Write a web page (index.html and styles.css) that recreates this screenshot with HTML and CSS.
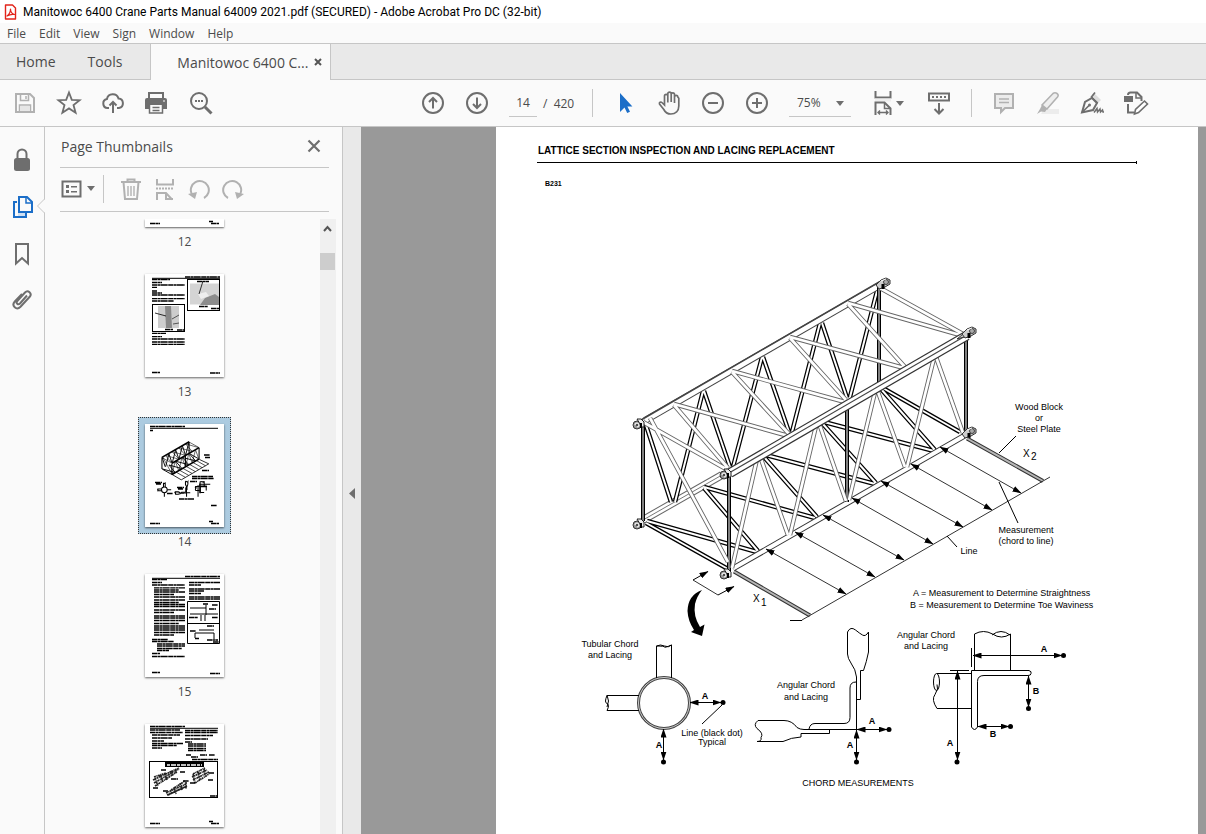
FILE: index.html
```html
<!DOCTYPE html>
<html lang="en">
<head>
    <meta charset="UTF-8">
    <meta name="viewport" content="width=device-width, initial-scale=1.0">
    <title>Manitowoc 6400 Crane Parts Manual 64009 2021.pdf (SECURED) - Adobe Acrobat Pro DC (32-bit)</title>
    <link rel="stylesheet" href="styles.css">
</head>
<body>
    <header class="titlebar">
        <svg class="app-icon" width="13" height="16" viewBox="0 0 13 16">
            <path d="M1.500 1h7l3 3v11h-10z" fill="#fff" stroke="#e2231a" stroke-width="1.400" stroke-linejoin="round"/>
            <path d="M3 12c2-1.500 3.500-4.500 3.500-7 0 3 2 5 4 5.500-3-.6-5 0-7.500 1.500z" fill="none" stroke="#e2231a" stroke-width="1.200" stroke-linejoin="round"/>
        </svg>
        <span>Manitowoc 6400 Crane Parts Manual 64009 2021.pdf (SECURED) - Adobe Acrobat Pro DC (32-bit)</span>
    </header>

    <nav class="menubar">
        <button>File</button>
        <button>Edit</button>
        <button>View</button>
        <button>Sign</button>
        <button>Window</button>
        <button>Help</button>
    </nav>

    <div class="tabs">
        <button class="tab">Home</button>
        <button class="tab">Tools</button>
        <div class="tab-doc">
            <button class="tab-name">Manitowoc 6400 C...</button>
            <button class="tab-close" aria-label="Close tab">
                <svg width="8" height="8" viewBox="0 0 8 8"><path d="M1 1l6 6M7 1l-6 6" stroke="#555" stroke-width="2"/></svg>
            </button>
        </div>
    </div>

    <div class="toolbar">
        <div class="group">
            <button class="tool light" aria-label="Save">
                <svg width="24" height="24" viewBox="0 0 24 24"><path d="M3 3h14l4 4v14H3z"/><path d="M7.500 3.500v6h8v-6M13 5v3M6.500 21v-7h11v7" stroke-width="1.500"/><path d="M7 15h10v5H7z" fill="#e6e6e6" stroke="none"/></svg>
            </button>
            <button class="tool" aria-label="Star">
                <svg width="26" height="26" viewBox="0 0 26 26"><path d="M13 2.500l2.800 7.300 7.800.4-6.100 4.900 2.100 7.600L13 18.400l-6.600 4.300 2.100-7.600-6.100-4.900 7.800-.4z" stroke-width="1.800"/></svg>
            </button>
            <button class="tool" aria-label="Upload">
                <svg width="24" height="24" viewBox="0 0 24 24"><path d="M8 17H6.500a4.500 4.500 0 0 1-.6-8.900A6 6 0 0 1 17.500 7.500 4.800 4.800 0 0 1 18 17h-2"/><path d="M12 22V11M8.500 14.500L12 11l3.500 3.500"/></svg>
            </button>
            <button class="tool" aria-label="Print">
                <svg width="24" height="24" viewBox="0 0 24 24"><path d="M4 8V2h14v6"/><path d="M0 9q0-2 2-2h18q2 0 2 2v9h-4v-4H4v4H0z" fill="#6e6e6e" stroke="none"/><path d="M4.500 13v9h13v-9zM7.500 16.500h7M7.500 19.500h7" stroke-width="1.500"/><path d="M18 10h2" stroke="#fff" stroke-width="1"/></svg>
            </button>
            <button class="tool" aria-label="Find">
                <svg width="24" height="24" viewBox="0 0 24 24"><circle cx="10" cy="10" r="8"/><path d="M16 16l6.500 6.500" stroke-width="3"/><path d="M6 10h2M9 10h2M12 10h2"/></svg>
            </button>
        </div>
        <div class="group main-tools">
            <button class="tool" aria-label="Previous page">
                <svg width="24" height="24" viewBox="0 0 24 24"><circle cx="12" cy="12" r="10"/><path d="M12 17.500V7.500M8 11l4-4 4 4"/></svg>
            </button>
            <button class="tool" aria-label="Next page">
                <svg width="24" height="24" viewBox="0 0 24 24"><circle cx="12" cy="12" r="10"/><path d="M12 6.500v10M8 13l4 4 4-4"/></svg>
            </button>
            <input class="page-input" type="text" value="14" aria-label="Page number">
            <span class="page-total">/&nbsp; 420</span>
            <span class="sep"></span>
            <button class="tool" aria-label="Select">
                <svg width="24" height="24" viewBox="0 0 24 24"><path d="M7 2v19l4.500-4.500 2.700 5.500 2.800-1.300-2.600-5.200h5z" fill="#1b6ec8" stroke="none"/></svg>
            </button>
            <button class="tool" aria-label="Hand">
                <svg width="26" height="26" viewBox="0 0 26 26"><path d="M8.500 15V6a1.600 1.600 0 0 1 3.300 0v6.500V3.800a1.700 1.700 0 0 1 3.400 0V12 4.500a1.600 1.600 0 0 1 3.300 0V13 7a1.600 1.600 0 0 1 3.300 0l1 1.200V16c0 5-3.300 8-8 8-3.500 0-5.500-1.500-7-4.500L3.500 14c-.7-1.500 1.300-2.600 2.400-1.500z" stroke-width="1.700"/></svg>
            </button>
            <button class="tool" aria-label="Zoom out">
                <svg width="24" height="24" viewBox="0 0 24 24"><circle cx="12" cy="12" r="10"/><path d="M7 12h10"/></svg>
            </button>
            <button class="tool" aria-label="Zoom in">
                <svg width="24" height="24" viewBox="0 0 24 24"><circle cx="12" cy="12" r="10"/><path d="M7 12h10M12 7v10"/></svg>
            </button>
            <div class="zoom">
                <select aria-label="Zoom level"><option>75%</option><option>100%</option></select>
            </div>
            <button class="tool fit" aria-label="Fit page">
                <svg width="18" height="26" viewBox="0 0 18 26"><path d="M1.500 1v6.500h15V1"/><path d="M1 8.500h16v3H1z" fill="#eee" stroke="none"/><path d="M1.500 25V12.500h9l6 6V25"/><path d="M10.500 13v5.500h6" stroke-width="1.500"/><path d="M4 22.500h10M6 20.500l-2 2 2 2M12 20.500l2 2-2 2" stroke-width="1.400"/></svg>
                <span class="caret"></span>
            </button>
            <button class="tool" aria-label="Scrolling">
                <svg width="24" height="24" viewBox="0 0 24 24"><path d="M2 2.500h20v7H2z"/><path d="M5 6h2M9 6h2M13 6h2M17 6h2M12 12v10M7.500 18l4.500 4.500 4.500-4.500"/></svg>
            </button>
            <span class="sep tight"></span>
            <button class="tool light" aria-label="Comment">
                <svg width="24" height="24" viewBox="0 0 24 24"><path d="M3 3h18v14h-8l-4 4v-4H3z" fill="#ececec"/><path d="M7 8h10M7 11.500h10" stroke-width="1.400"/></svg>
            </button>
            <button class="tool light" aria-label="Highlight">
                <svg width="24" height="24" viewBox="0 0 24 24"><path d="M8 18h15v5H5z" fill="#ececec" stroke="none"/><path d="M6 14L17 2.500q2-1.500 4 0t.5 3.500L11 18z" fill="#eee" stroke-width="1.600"/><path d="M6 14l5 4-2 3-4-.500-4 2.500 3-5z" fill="#b1b1b1" stroke="none"/></svg>
            </button>
            <button class="tool" aria-label="Sign">
                <svg width="26" height="24" viewBox="0 0 26 24"><path d="M13 4l2-2 7 7-3 3z" fill="#ddd" stroke="none"/><path d="M3 21.500L6 11l7-4 5 5-4 7z"/><path d="M3 21.500l7-7M16 1.500L12.500 6l6 6" stroke-width="1.700"/><circle cx="10.500" cy="14" r="1.500" fill="#6e6e6e" stroke="none"/><path d="M15 21.500l3-4 .5 3.500 2.500-3 .5 3 2-2 .5 2h1" stroke-width="1.500"/></svg>
            </button>
            <button class="tool" aria-label="More tools">
                <svg width="26" height="26" viewBox="0 0 26 26"><path d="M1 6h9v6H1z" fill="#6e6e6e" stroke="none"/><path d="M5 5q0-2.500 2.500-2.500H14l4.500 4.500v4M5 14v8.500h6"/><path d="M13 3v5h5" stroke-width="1.500"/><path d="M11.500 24l1-4.500 9-8.500 3 3-9 8.500z" fill="#fff" stroke-width="1.600"/></svg>
            </button>
        </div>
    </div>

    <div class="workspace">
        <aside class="rail">
            <button aria-label="Security">
                <svg width="18" height="24" viewBox="0 0 18 24"><path d="M4.500 11V6a4.500 4.500 0 0 1 9 0v5" fill="none" stroke="#6e6e6e" stroke-width="2"/><rect x="1" y="10" width="16" height="13" rx="2.500" fill="#6e6e6e"/></svg>
            </button>
            <button class="active" aria-label="Page Thumbnails">
                <svg width="22" height="24" viewBox="0 0 22 24" fill="none" stroke="#1b6ec8" stroke-width="2"><path d="M7 17h8v4H7z" fill="#cfe0f3" stroke="none"/><path d="M6 7H3v15h12v-4"/><path d="M8 2h8l5 5v10H8z"/><path d="M15 2.500V8h5" stroke-width="1.500"/></svg>
                <svg class="notch" width="8" height="14" viewBox="0 0 8 14"><path d="M8 0L1 7l7 7z" fill="#fafafa"/><path d="M7.500 0L.500 7l7 7" fill="none" stroke="#c6c6c6"/></svg>
            </button>
            <button aria-label="Bookmarks">
                <svg width="18" height="24" viewBox="0 0 18 24"><path d="M3 2h12v19.500L9 16l-6 5.500z" fill="none" stroke="#6e6e6e" stroke-width="2"/></svg>
            </button>
            <button aria-label="Attachments">
                <svg width="22" height="24" viewBox="0 0 22 24"><path d="M16 6.500l-7 8c-2 2-4.500-.5-2.700-2.500L14 3.500c3-3 7.500 1 4.700 4.300l-9.200 10c-4 4-9.500-1-5.700-5.300L11 5" fill="none" stroke="#6e6e6e" stroke-width="2"/></svg>
            </button>
        </aside>

        <section class="panel">
            <div class="panel-head">
                <span>Page Thumbnails</span>
                <button aria-label="Close panel">
                    <svg width="14" height="14" viewBox="0 0 14 14"><path d="M1.500 1.500l11 11M12.500 1.500l-11 11" stroke="#6e6e6e" stroke-width="2.200"/></svg>
                </button>
            </div>
            <div class="panel-tools">
                <button class="options" aria-label="Options">
                    <svg width="21" height="18" viewBox="0 0 21 18"><path d="M1.500 1.500h18v15h-18z" fill="none" stroke="#6e6e6e" stroke-width="2"/><path d="M5 5h3v3H5zM5 10h3v3H5zM10 6h6v1.500h-6zM10 11h6v1.500h-6z" fill="#6e6e6e"/></svg>
                    <span class="caret"></span>
                </button>
                <button class="mini first" aria-label="Delete pages">
                    <svg width="22" height="24" viewBox="0 0 22 24"><path d="M1 5h20M7.500 5V2.500h7V5M3.500 5l1.500 17h12l1.500-17"/><path d="M8 9v10M11 9v10M14 9v10" stroke-width="1.400"/></svg>
                </button>
                <button class="mini" aria-label="Extract pages">
                    <svg width="20" height="24" viewBox="0 0 20 24"><path d="M2 2v5.500h16V2M2 23v-7h9l6 6.500M11 16v6h7"/><path d="M1 11.500h18" stroke-dasharray="2 1"/></svg>
                </button>
                <button class="mini" aria-label="Rotate left">
                    <svg width="22" height="24" viewBox="0 0 22 24"><path d="M4 17.500a9 9 0 1 1 12 3.500"/><path d="M0 17l9-2-2 7z" fill="#b1b1b1" stroke="none"/></svg>
                </button>
                <button class="mini" aria-label="Rotate right">
                    <svg width="22" height="24" viewBox="0 0 22 24"><path d="M18 17.500a9 9 0 1 0-12 3.500"/><path d="M22 17l-9-2 2 7z" fill="#b1b1b1" stroke="none"/></svg>
                </button>
            </div>
            <div class="thumb-area">
                <div class="thumbs">
                    <a class="thumb cut" href="#p12">
                        <svg width="79" height="8" viewBox="0 95 79 8"><path class="txt" d="M5 99.500h10M64 97.500h4M66 99.500h8"/></svg>
                        <span>12</span>
                    </a>
                    <a class="thumb" href="#p13">
                        <svg width="79" height="103" viewBox="0 0 79 103">
                            <path class="txt" d="M40 3h35M7 5.500h18M7 8.500h10M7 11h33M7 13.300h5M7 17h5M7 19h10M7 21h33M7 24.700h33M7 27h22M7 59.300h14M7 62.700h10M7 65h33M7 68h33M7 70.300h33M7 98.500h8M65 99h10"/>
                            <path class="rule" d="M7 4.300h68"/>
                            <rect class="frame" x="42.500" y="5.500" width="32" height="31"/>
                            <path d="M45 9.500h29v21H45z" fill="#d4d4d4"/><path d="M55 31l5-7 10-4 4 3v8z" fill="#8c8c8c"/><path d="M53 20l8-2 3 4-8 3z" fill="#eee"/><path d="M58 7l-4 13" stroke="#000" stroke-width=".8"/>
                            <rect class="frame" x="7.500" y="30.500" width="32" height="27"/>
                            <path d="M13 32h21v22H13z" fill="#cdcdcd"/><path d="M20 32h6l1 22h-6z" fill="#888"/><path d="M27 45l7-4M28 50l6-1" stroke="#555"/><path d="M10 39l11 3" stroke="#000" stroke-width=".8"/>
                            <path class="txt" d="M52 7.500h12M54 32.500h9M66 34.500h8M20 55.500h8M32 56h7"/>
                        </svg>
                        <span>13</span>
                    </a>
                    <a class="thumb selected" href="#p14">
                        <svg width="79" height="103" viewBox="0 0 79 103">
                            <path class="txt" d="M5 2.500h35M5 6.500h3M59 31h6M60 33.500h5M57 46.500h7M47 52.500h21M47 54.500h22M10 58.500h7M11 60h5M32 63.500h7M33 65h5M45 57.500h7M22 69.500h6M34 75h15M66 81.500h6M5 99.500h10M64 97.500h4M66 99.500h8"/>
                            <path class="rule" d="M5 4.300h68"/>
                            <g transform="translate(-57 -15) scale(.115)" fill="none" stroke="#000">
                                <use href="#tubes-dark" stroke-width="8"/>
                                <use href="#tubes-light" stroke-width="5"/>
                                <use href="#posts" stroke-width="9"/>
                                <path d="M643 421L880 285M730 472L966 336M730 570L965 436" stroke-width="14"/>
                                <path d="M734 571l77 45 239-139-83-39" stroke-width="7"/>
                                <use href="#measures" stroke-width="6"/>
                                <use href="#details" stroke-width="9"/>
                                <circle cx="664" cy="703" r="25" stroke-width="9"/>
                                <path d="M690 702H723M664 729V762M857 729H889M857 730V762M973 655H1063M957 671V762M1028 676V708M978 726H1010" stroke-width="9"/>
                            </g>
                        </svg>
                        <span>14</span>
                    </a>
                    <a class="thumb" href="#p15">
                        <svg width="79" height="103" viewBox="0 0 79 103">
                            <path class="txt" d="M40 2.500h35M7 5.500h15M7 8.500h10M7 11h33M9 13.800h31M9 16h25M9 18h31M9 20.500h20M9 23h31M9 26h31M9 28.500h25M9 30.500h31M9 32.500h31M9 36h31M9 38.500h20M9 42h31M9 44h31M9 46.500h31M9 49.500h25M9 52h31M9 54h31M9 56h31M9 58.500h31M9 61h20M7 65.500h16M7 67.500h22M12 70h28M12 72h28M12 74.500h25M12 76.500h12M7 79.500h8M7 82.500h33M44 8.500h31M44 11h12M44 15h31M44 17h15M44 19.500h12M44 23h31M44 25h31M7 98.500h8M65 99.500h10"/>
                            <path class="rule" d="M7 4.300h68"/>
                            <path class="frame" d="M42.500 27.500h32v42h-32zM42.500 49.500h32"/>
                            <path d="M45 34h16M45 40h28M56 41v6M60 41v6M61 31v10M50 59h19M50 59v5M69 59v6M54 56h15" stroke="#000" fill="none"/>
                            <path class="txt" d="M58 30h5M67 31h6M64 35h7M44 43.500h9M67 43.500h6M62 52h7M45 57h6M50 64.500h4M62 66h11M68 68h6"/>
                        </svg>
                        <span>15</span>
                    </a>
                    <a class="thumb" href="#p16" aria-label="Page 16">
                        <svg width="79" height="103" viewBox="0 0 79 103">
                            <path class="txt" d="M5 2.500h35M5 6h30M5 8.500h33M7 11h28M7 14h20M7 17h12M7 19.500h31M7 21.500h25M7 24h10M40 6.500h33M40 8.500h33M40 11.500h28M40 15h23M40 18h7M43 20h18M43 22h18M43 24.500h18M43 26.500h18M41 31h5M46 33h7M55 31h7M64 31h6M47 35.500h26"/>
                            <path class="rule" d="M5 4.300h68"/>
                            <rect class="frame" x="4.500" y="37.500" width="68" height="36"/>
                            <path d="M20 38h39v5H20z"/><path d="M22 41h35" stroke="#fff" stroke-width="1.500" stroke-dasharray="3 1 5 1"/>
                            <g fill="none" stroke="#222" stroke-dasharray="2 .6 1 .4">
                                <path d="M8 56L34 44M9 59L34 45M10 62L32 48M9 53l12-4M10 54l3 8M15 51l3 7M20 49l2 7M25 47l2 5" stroke-width="1.700"/>
                                <path d="M48 50l12-6M47 53l15-7M48 56l16-8M50 59l14-9M48 50l2 9M53 48l2 8M59 45l2 8" stroke-width="1.700"/>
                                <path d="M21 69l20-9M23 71l19-9M26 66l14-9M22 71l18-8M29 63l2 7M35 59l2 7M41 58v7" stroke-width="1.700"/>
                            </g>
                            <path class="txt" d="M16 46h5M35 48h5M26 55h7M8 64h5M45 59h5M63 56h5M64 49h5M18 67h5M38 57h6M65 72h7M5 99.500h10M64 97.500h4M66 99.500h8"/>
                        </svg>
                    </a>
                </div>
                <div class="scrollbar">
                    <svg width="9" height="7" viewBox="0 0 9 7"><path d="M1 6l3.500-4L8 6" fill="none" stroke="#555" stroke-width="2"/></svg>
                    <div class="scroll-thumb"></div>
                </div>
            </div>
        </section>

        <button class="collapse" aria-label="Collapse panel">
            <svg width="6" height="11" viewBox="0 0 6 11"><path d="M6 0v11L0 5.500z" fill="#6e6e6e"/></svg>
        </button>

        <main class="viewer">
            <article class="page">
                <svg class="figure" viewBox="496 127 702 707">
                    <defs>
                        <marker id="head" markerUnits="userSpaceOnUse" markerWidth="9" markerHeight="6" refX="8.500" refY="3" orient="auto-start-reverse">
                            <path d="M0 0l9 3-9 3z" fill="#000" stroke="none"/>
                        </marker>
                        <!-- bottom and back lacing -->
                        <path id="tubes-dark" d="M647 521L757 552M704 488L758 551M704 487L815 518M646 523L728 569M764 457L817 517M766 455L875 484M822 423L876 483M824 422L934 451M881 389L935 450M881 387L960 432M645 422L671 502M703 391L675 502M704 391L730 467M762 357L733 467M763 357L789 432M820 323L792 432M822 323L847 398M877 291L850 397"/>
                        <!-- top and front lacing -->
                        <path id="tubes-light" d="M643 422L726 469M650 418L728 562M880 288L963 334M674 405L728 468M674 404L785 435M732 372L789 434M732 371L845 402M790 338L846 400M790 337L904 368M848 304L905 367M848 303L960 335M757 459L732 568M761 459L788 535M816 426L790 535M820 426L846 501M875 392L849 500M878 392L905 467M934 358L907 467M936 357L963 433"/>
                        <path id="posts" d="M643 422V521M729 474V571M879 287V384M847 408V502M966 338V434"/>
                        <g id="measures">
                            <path d="M766 549L846 594"/><path d="M795 532L875 577"/><path d="M823 515L904 560"/><path d="M852 498L933 544"/><path d="M881 481L963 527"/><path d="M911 464L992 510"/><path d="M940 447L1021 493"/>
                        </g>
                        <g id="details">
                            <!-- tubular chord -->
                            <path d="M656.500 678V646q4-2 8 0t7-1V678M656.500 646q8 0 8 1t7-2M639 695.500H607q-3 7 0 8t0 7H639M607 695q3 6 0 12"/>
                            <!-- angular chord, centre -->
                            <path d="M856.500 729.500H804q-4 0-7-2-5-7-13-7H758q-5 4-1 8 7 5 4 9 1 4-4 4H783q8-4 18-4.500V733.500H829.500V729.500"/>
                            <path d="M809 729q1-5.500 6-5.500H844q6 0 6-6V688q0-6 6-6M856.500 730V677q-1-8-5-13-4-6-4-10V632q3-6 8-2t7 5q3 2 6-3V652q-2 10-5 18.500H860.500V699.500H857"/>
                            <!-- angular chord, right -->
                            <path d="M974.500 670V634q9-5 18 0 9 6 18 0V670M992 635q9-7 18 0M971.500 673.500H937M971.500 708.500H937q-6-9-2-14 4-6 2-10"/>
                            <ellipse cx="936.500" cy="682" rx="3" ry="8.500"/>
                            <path d="M971.500 670.500H1029q3 1 2 3 0 2-3 2H984q-6.500 0-6.500 6V727q-3 5-6 0z"/>
                            <path d="M971.500 648V667M950 670.500H969"/>
                        </g>
                        <g id="lug">
                            <circle cx="-5" cy="4" r="4" fill="#999" stroke="#333"/><path d="M-7 4a2 2 0 1 1 2 2" stroke="#fff"/><circle cx="-5" cy="4" r="1" fill="#333"/>
                            <path d="M-5-2h4l3 3v5h-3l-1-3z" fill="#eee" stroke="#222"/><path d="M-1 2v5" stroke="#000" stroke-width="2"/>
                        </g>
                        <g id="lug-right">
                            <path d="M-6 2l5-5 5-2 4 2v4l-5 3-6 2z" fill="#ccc" stroke="#333"/><circle cx="4" cy="-1" r="2.500" fill="#aaa" stroke="#222" stroke-width=".8"/><path d="M-1-2l5-2" stroke="#fff"/><path d="M1 1v5" stroke="#000" stroke-width="3"/>
                        </g>
                    </defs>

                    <text class="heading" x="538" y="154">LATTICE SECTION INSPECTION AND LACING REPLACEMENT</text>
                    <path class="line" d="M537 162.500H1137M1136.500 161v3"/>
                    <text class="code" x="545" y="186">B231</text>

                    <g fill="none">
                        <path d="M643 520L722 475" stroke="#666" stroke-width="8"/>
                        <path d="M643 520L722 475" stroke="#fff" stroke-width="6"/>
                        <path d="M643 520L722 475" stroke="#777" stroke-width="1"/>
                        <use href="#tubes-dark" stroke="#000" stroke-width="4.500"/>
                        <use href="#tubes-dark" stroke="#fff" stroke-width="2"/>
                        <path d="M645 420.500L882 284" stroke="#444" stroke-width="7"/>
                        <path d="M645 420.500L882 284" stroke="#fff" stroke-width="5"/>
                        <path d="M641 420L880 281.500" stroke="#444" stroke-width="1.500"/>
                        <path d="M733 568.500L964 436" stroke="#333" stroke-width="6"/>
                        <path d="M733 568.500L964 436" stroke="#fff" stroke-width="4"/>
                        <use href="#posts" stroke="#000" stroke-width="4"/>
                        <use href="#posts" stroke="#fff" stroke-width="1"/>
                        <use href="#tubes-light" stroke="#666" stroke-width="4.500"/>
                        <use href="#tubes-light" stroke="#fff" stroke-width="2.700"/>
                        <path d="M730 473L967 335.500" stroke="#333" stroke-width="10"/>
                        <path d="M730 473L967 335.500" stroke="#fff" stroke-width="7.500"/>
                        <path d="M729 473L967 335" stroke="#444" stroke-width="1.200"/>
                        <path d="M957 339l11-9 3 5z" fill="#ccc" stroke="#333"/>

                        <use href="#lug" x="642" y="421"/>
                        <use href="#lug" x="642" y="521"/>
                        <use href="#lug" x="729" y="471"/>
                        <use href="#lug" x="729" y="571"/>
                        <use href="#lug-right" x="882" y="283"/>
                        <use href="#lug-right" x="968" y="332"/>
                        <use href="#lug-right" x="968" y="432"/>

                        <path d="M734 571.500L810 615.500M967 438.500L1043 481" stroke="#333" stroke-width="4"/>
                        <path d="M734 571.500L810 615.500M967 438.500L1043 481" stroke="#b5b5b5" stroke-width="2"/>
                        <path class="line" d="M790 620.500H802"/>
                        <path class="thin" d="M802 620L1050 477"/>
                        <use href="#measures" class="measure"/>
                        <path class="line" d="M1016 436L999 453M999 482L1018 523M947 536L957 547M722 705L702 724"/>
                        <path class="thin" d="M693 580L718 595"/>
                        <path class="arrow end" d="M693 580L708 571.500"/>
                        <path class="arrow end" d="M718 595L734 586.500"/>
                        <path d="M702 590Q688 595 687.500 611Q688 621 694 630L691 632L702 636L704.500 624.500L700 627Q693 616 695 604Q697 596 702 590z" fill="#000"/>

                        <circle cx="664" cy="703" r="25.500" stroke="#444" stroke-width="3"/>
                        <circle cx="664" cy="703" r="25.500" stroke="#ccc" stroke-width="1"/>
                        <use href="#details" class="line"/>

                        <g class="arrow both">
                            <path d="M690 702.500H721"/><path d="M663.500 729V760"/><path d="M857 729.500H887"/><path d="M856.500 730V760"/>
                            <path d="M973 655.500H1062"/><path d="M957.500 671V760"/><path d="M1028.500 676V707"/><path d="M978 726.500H1009"/>
                        </g>
                    </g>
                    <g>
                        <circle cx="723" cy="702.500" r="2.500"/><circle cx="663.500" cy="762" r="2.500"/><circle cx="889" cy="729.500" r="2.500"/><circle cx="856.500" cy="762" r="2.500"/>
                        <circle cx="1063.500" cy="655.500" r="2.500"/><circle cx="957" cy="762" r="2.500"/><circle cx="1028.500" cy="708.500" r="2.500"/><circle cx="1010.500" cy="726.500" r="2.500"/>
                    </g>

                    <g class="label mid">
                        <text x="1039" y="410">Wood Block</text>
                        <text x="1039" y="421">or</text>
                        <text x="1039" y="432">Steel Plate</text>
                        <text x="1026" y="533">Measurement</text>
                        <text x="1026" y="544">(chord to line)</text>
                        <text x="969" y="554">Line</text>
                        <text x="610" y="647">Tubular Chord</text>
                        <text x="610" y="658">and Lacing</text>
                        <text x="806" y="688">Angular Chord</text>
                        <text x="806" y="700">and Lacing</text>
                        <text x="926" y="638">Angular Chord</text>
                        <text x="926" y="649">and Lacing</text>
                        <text x="712" y="736">Line (black dot)</text>
                        <text x="712" y="745">Typical</text>
                        <text x="858" y="786">CHORD MEASUREMENTS</text>
                    </g>
                    <g class="label">
                        <text x="913" y="596">A = Measurement to Determine Straightness</text>
                        <text x="910" y="608">B = Measurement to Determine Toe Waviness</text>
                    </g>
                    <g class="mark">
                        <text x="1023" y="457">X</text><text x="1031" y="460">2</text>
                        <text x="753" y="602">X</text><text x="761" y="606">1</text>
                    </g>
                    <g class="label bold mid">
                        <text x="705" y="699">A</text><text x="659" y="748">A</text><text x="872" y="724">A</text><text x="850" y="748">A</text>
                        <text x="1044" y="652">A</text><text x="950" y="746">A</text><text x="1036" y="694">B</text><text x="993" y="737">B</text>
                    </g>
                </svg>
            </article>
        </main>
    </div>
</body>
</html>
```

FILE: styles.css
```css
* {
    box-sizing: border-box;
}

body {
    margin: 0;
    height: 100vh;
    display: flex;
    flex-direction: column;
    overflow: hidden;
    background: #fafafa;
    color: #4b4b4b;
    font-family: "Open Sans", "Noto Sans", sans-serif;
    font-size: 12px;
}

button {
    font: inherit;
    color: inherit;
    background: none;
    border: 0;
    padding: 0;
    cursor: pointer;
}

svg {
    display: block;
}

.titlebar {
    height: 23px;
    display: flex;
    align-items: center;
    gap: 6px;
    padding-left: 4px;
    background: #fff;
    color: #000;
    font-family: Roboto, "Open Sans", sans-serif;
    white-space: nowrap;
}

.menubar {
    height: 20px;
    display: flex;
    align-items: center;
    gap: 13px;
    padding-left: 7px;
}

/* Tab strip */
.tabs {
    height: 37px;
    display: flex;
    background: #e9e9e9;
    border-top: 1px solid #c6c6c6;
    border-bottom: 1px solid #c6c6c6;
    font-size: 14px;
}

.tab {
    padding: 0 16px;
}

.tab + .tab {
    padding: 0 28px 0 16px;
}

.tab-doc {
    display: flex;
    align-items: center;
    gap: 6px;
    margin: 0 0 -1px;
    padding: 0 8px 0 26px;
    background: #fafafa;
    border-left: 1px solid #c6c6c6;
    border-right: 1px solid #c6c6c6;
}

/* Main toolbar */
.toolbar {
    height: 47px;
    display: flex;
    align-items: center;
    padding-left: 3px;
    border-bottom: 1px solid #c6c6c6;
}

.group {
    display: flex;
    align-items: center;
}

.main-tools {
    margin-left: 188px;
}

.tool {
    width: 44px;
    height: 44px;
    display: flex;
    align-items: center;
    justify-content: center;
    flex-shrink: 0;
}

.tool svg {
    fill: none;
    stroke: #6e6e6e;
    stroke-width: 2;
}

.tool.light svg {
    stroke: #b1b1b1;
}

.page-input {
    width: 28px;
    height: 28px;
    margin-left: 10px;
    padding: 0;
    border: 0;
    border-bottom: 1px solid #c6c6c6;
    background: none;
    font: inherit;
    color: inherit;
    text-align: center;
}

.page-total {
    width: 49px;
    padding-left: 6px;
    white-space: nowrap;
}

.sep {
    width: 1px;
    height: 28px;
    margin: 0 10px 0 6px;
    background: #c6c6c6;
}

.sep.tight {
    margin: 0 10px;
}

.zoom {
    position: relative;
    margin-left: 10px;
}

.zoom select {
    width: 62px;
    height: 28px;
    padding: 0 0 0 8px;
    appearance: none;
    border: 0;
    border-bottom: 1px solid #c6c6c6;
    border-radius: 0;
    background: none;
    font: inherit;
    color: inherit;
}

.caret,
.zoom::after {
    border-left: 4px solid transparent;
    border-right: 4px solid transparent;
    border-top: 5px solid #6e6e6e;
}

.zoom::after {
    content: "";
    position: absolute;
    right: 7px;
    top: 12px;
    pointer-events: none;
}

.tool.fit {
    width: 66px;
    gap: 4px;
    padding-left: 10px;
}

/* Workspace */
.workspace {
    flex: 1;
    min-height: 0;
    display: flex;
}

.rail {
    width: 45px;
    padding-top: 9px;
    border-right: 1px solid #c6c6c6;
}

.rail button {
    position: relative;
    width: 44px;
    height: 47px;
    display: flex;
    align-items: center;
    justify-content: center;
}

.notch {
    position: absolute;
    right: -1px;
    top: 16px;
}

.panel {
    width: 298px;
    display: flex;
    flex-direction: column;
    border-right: 1px solid #c6c6c6;
}

.panel-head {
    height: 41px;
    display: flex;
    align-items: center;
    justify-content: space-between;
    margin: 0 13px 0 15px;
    padding: 0 8px 2px 1px;
    border-bottom: 1px solid #c6c6c6;
    font-size: 14px;
}

.panel-tools {
    height: 44px;
    display: flex;
    align-items: center;
    margin: 0 13px 0 15px;
    padding-bottom: 2px;
    border-bottom: 1px solid #c6c6c6;
}

.options {
    height: 28px;
    display: flex;
    align-items: center;
    gap: 5px;
    padding: 0 8px 0 1px;
    border-right: 1px solid #c6c6c6;
}

.mini {
    width: 34px;
    display: flex;
    justify-content: center;
}

.mini.first {
    margin-left: 10px;
}

.mini svg {
    fill: none;
    stroke: #b1b1b1;
    stroke-width: 2;
}

.thumb-area {
    flex: 1;
    min-height: 0;
    display: flex;
    margin: 7px 6px 0 4px;
}

.thumbs {
    flex: 1;
    display: flex;
    flex-direction: column;
    align-items: center;
    overflow: hidden;
}

.thumb {
    width: 93px;
    height: 150px;
    flex-shrink: 0;
    display: flex;
    flex-direction: column;
    align-items: center;
    color: inherit;
    line-height: 16px;
    text-decoration: none;
}

.thumb svg {
    margin: 7px 0;
    background: #fff;
    box-shadow: 0 1px 2px rgba(0, 0, 0, 0.6);
}

.thumb.cut {
    height: 48px;
}

.thumb.cut svg {
    margin-top: 0;
}

.thumb.selected {
    background: linear-gradient(#accbe0, #accbe0) no-repeat 0 0 / 93px 117px;
}

.thumb.selected svg {
    outline: 1px dotted #333;
    outline-offset: 6px;
}

.txt {
    fill: none;
    stroke: #000;
    stroke-width: 1.300;
    stroke-dasharray: 5 .4 3 .3 7 .5;
}

.rule,
.frame {
    fill: none;
    stroke: #000;
}

.scrollbar {
    width: 16px;
    background: #f0f0f0;
}

.scrollbar svg {
    margin: 6px auto 21px 3px;
}

.scroll-thumb {
    width: 15px;
    height: 17px;
    background: #cdcdcd;
}

.collapse {
    width: 18px;
    display: flex;
    align-items: center;
    justify-content: center;
    padding-top: 26px;
    background: #e9e9e9;
}

.viewer {
    flex: 1;
    display: flex;
    padding: 0 8px 0 135px;
    background: #999;
    overflow: hidden;
}

.page {
    flex: 1;
    background: #fff;
}

.figure {
    width: 100%;
    fill: #000;
    font-family: "Liberation Sans", Arial, sans-serif;
}

.heading {
    font-size: 10px;
    font-weight: bold;
}

.code {
    font-size: 7px;
    font-weight: bold;
}

.label {
    font-size: 9px;
}

.mark {
    font-size: 10px;
}

.bold {
    font-weight: bold;
}

.mid {
    text-anchor: middle;
}

.line,
.arrow {
    fill: none;
    stroke: #000;
    stroke-width: 1;
}

.thin {
    stroke: #333;
    stroke-width: 1;
}

.arrow.end {
    marker-end: url(#head);
}

.arrow.both path,
.measure {
    marker-start: url(#head);
    marker-end: url(#head);
}

.measure {
    stroke: #333;
}
```
